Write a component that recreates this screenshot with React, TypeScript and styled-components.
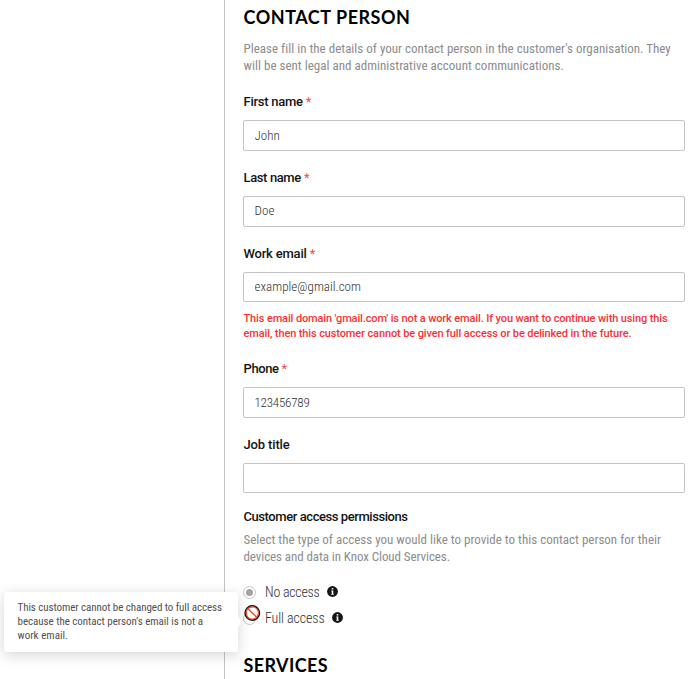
import React from 'react';
import styled, { createGlobalStyle } from 'styled-components';

const GlobalStyle = createGlobalStyle`
  *, *::before, *::after { box-sizing: border-box; }
  body { margin: 0; background: #fff; overflow: hidden; }
`;

const Page = styled.div`
  position: relative;
  display: flex;
  justify-content: flex-start;
  width: 697px;
  height: 679px;
  overflow: hidden;
  background: #fff;
  font-family: Roboto, 'Liberation Sans', sans-serif;
  font-stretch: 85%;
`;

const Sidebar = styled.aside`
  flex: 0 0 224px;
`;

const Content = styled.main`
  flex: 1;
  border-left: 1px solid #c4c4c4;
  padding: 7px 12px 0 18px;
`;

const Heading = styled.h2<{ $spacing: number }>`
  margin: 0;
  padding-left: 0.5px;
  font: 700 18px/20px Lato, sans-serif;
  letter-spacing: ${p => p.$spacing}px;
  color: #000;
`;

const Description = styled.p<{ $top: number }>`
  margin: ${p => p.$top}px 0 0;
  padding-left: 0.5px;
  font-size: 13px;
  line-height: 17px;
  color: #8c8c8c;
`;

const TextLine = styled.span<{ $spacing: number }>`
  display: block;
  white-space: nowrap;
  letter-spacing: ${p => p.$spacing}px;
`;

const Field = styled.div<{ $top: number }>`
  margin-top: ${p => p.$top}px;
`;

const Label = styled.label<{ $spacing: number }>`
  display: flex;
  gap: 3px;
  padding-left: 0.5px;
  font-size: 13px;
  font-weight: 500;
  font-stretch: 100%;
  line-height: 18px;
  white-space: nowrap;
  letter-spacing: ${p => p.$spacing}px;
  color: #141414;
`;

const Required = styled.span`
  font-weight: 400;
  color: #f04a4a;
`;

const Input = styled.input<{ $height: number; $spacing: number; $lift: number }>`
  display: block;
  width: 442px;
  height: ${p => p.$height}px;
  margin-top: 9px;
  padding: 0 10px ${p => p.$lift}px 10.5px;
  border: 1px solid #c4c4c4;
  border-radius: 2px;
  outline: 0;
  background: #fff;
  font: inherit;
  font-size: 13px;
  font-weight: 300;
  letter-spacing: ${p => p.$spacing}px;
  color: #303030;
`;

const ErrorText = styled.div`
  margin-top: 9px;
  padding-left: 0.5px;
  font-size: 11px;
  font-weight: 500;
  font-stretch: 100%;
  line-height: 15px;
  color: #f53336;
`;

const Options = styled.div`
  display: grid;
  gap: 8px;
  margin: 18px 0 28px;
`;

const Option = styled.div`
  display: flex;
  align-items: center;
  height: 18px;
`;

const Radio = styled.span<{ $checked?: boolean }>`
  display: flex;
  align-items: center;
  justify-content: center;
  width: 13px;
  height: 13px;
  border: 1px solid #c6c6c6;
  border-radius: 50%;

  &::after {
    content: '';
    width: 7px;
    height: 7px;
    border-radius: 50%;
    background: ${p => (p.$checked ? '#a3a3a3' : 'transparent')};
  }
`;

const OptionText = styled.span<{ $width: number; $spacing: number }>`
  width: ${p => p.$width}px;
  margin-left: 9px;
  font-size: 14px;
  font-weight: 300;
  line-height: 18px;
  white-space: nowrap;
  letter-spacing: ${p => p.$spacing}px;
  color: #303030;
`;

const IconSvg = styled.svg`
  display: block;
  margin-top: -1px;
`;

const CursorSvg = styled.svg`
  position: absolute;
  left: 244px;
  top: 605px;
`;

const Tooltip = styled.div`
  position: absolute;
  left: 4px;
  top: 592px;
  width: 234px;
  height: 60px;
  padding: 9px 13px 0 13.5px;
  border-radius: 3px;
  background: #fff;
  box-shadow: 0 3px 14px rgba(0, 0, 0, 0.17);
  font-size: 11px;
  line-height: 14px;
  color: #505050;

  &::after {
    content: '';
    position: absolute;
    left: 234px;
    top: 25px;
    border: 5px solid transparent;
    border-left-color: #fff;
    border-right-width: 0;
  }
`;

function InfoIcon() {
  return (
    <IconSvg width="11" height="11" viewBox="0 0 11 11">
      <circle cx="5.5" cy="5.5" r="5.4" fill="#141414" />
      <rect x="4.7" y="2.1" width="1.6" height="1.4" fill="#fff" />
      <path d="M4.2 4.5h2.1v3.5h.5v.8H4.2V8h.5V5.3h-.5z" fill="#fff" />
    </IconSvg>
  );
}

function BlockedCursor() {
  return (
    <CursorSvg width="17" height="17" viewBox="0 0 17 17">
      <circle cx="8.3" cy="8" r="7.2" fill="#fff" stroke="#141414" strokeWidth="1.5" />
      <circle cx="8.3" cy="8" r="6.1" fill="none" stroke="#ee4326" strokeWidth="1.1" />
      <path d="M4 3.7l8.6 8.6" stroke="#ee4326" strokeWidth="1.3" />
    </CursorSvg>
  );
}

interface FormFieldProps {
  label: string;
  labelSpacing: number;
  value?: string;
  valueSpacing?: number;
  valueLift?: number;
  required?: boolean;
  height: number;
  top: number;
}

function FormField({
  label,
  labelSpacing,
  value = '',
  valueSpacing = 0,
  valueLift = 0,
  required,
  height,
  top,
}: FormFieldProps) {
  return (
    <Field $top={top}>
      <Label $spacing={labelSpacing}>
        {label}
        {required && <Required>*</Required>}
      </Label>
      <Input $height={height} $spacing={valueSpacing} $lift={valueLift} defaultValue={value} />
    </Field>
  );
}

export default function App() {
  return (
    <>
      <GlobalStyle />
      <Page>
        <Sidebar />
        <Content>
          <Heading $spacing={0.53}>CONTACT PERSON</Heading>
          <Description $top={13}>
            <TextLine $spacing={0.01}>
              Please fill in the details of your contact person in the customer's organisation. They
            </TextLine>
            <TextLine $spacing={0.015}>will be sent legal and administrative account communications.</TextLine>
          </Description>

          <FormField label="First name" labelSpacing={-0.26} value="John" valueSpacing={0} required height={31} top={19} />
          <FormField label="Last name" labelSpacing={-0.38} value="Doe" valueSpacing={0.05} valueLift={2} required height={31} top={18} />
          <FormField label="Work email" labelSpacing={-0.2} value="example@gmail.com" valueSpacing={0.03} valueLift={2} required height={30} top={18} />
          <ErrorText>
            <TextLine $spacing={-0.125}>
              This email domain 'gmail.com' is not a work email. If you want to continue with using this
            </TextLine>
            <TextLine $spacing={-0.12}>
              email, then this customer cannot be given full access or be delinked in the future.
            </TextLine>
          </ErrorText>
          <FormField label="Phone" labelSpacing={-0.4} value="123456789" valueSpacing={-0.2} required height={31} top={19} />
          <FormField label="Job title" labelSpacing={-0.15} height={30} top={18} />

          <Field $top={15}>
            <Label as="div" $spacing={-0.43}>Customer access permissions</Label>
          </Field>
          <Description $top={5}>
            <TextLine $spacing={0.006}>
              Select the type of access you would like to provide to this contact person for their
            </TextLine>
            <TextLine $spacing={-0.082}>devices and data in Knox Cloud Services.</TextLine>
          </Description>

          <Options>
            <Option>
              <Radio $checked />
              <OptionText $width={62} $spacing={-0.25}>No access</OptionText>
              <InfoIcon />
            </Option>
            <Option>
              <Radio />
              <OptionText $width={67} $spacing={-0.1}>Full access</OptionText>
              <InfoIcon />
            </Option>
          </Options>

          <Heading $spacing={0.39}>SERVICES</Heading>
        </Content>

        <Tooltip role="tooltip">
          <TextLine $spacing={-0.07}>This customer cannot be changed to full access</TextLine>
          <TextLine $spacing={-0.036}>because the contact person's email is not a</TextLine>
          <TextLine $spacing={0.03}>work email.</TextLine>
        </Tooltip>
        <BlockedCursor />
      </Page>
    </>
  );
}
